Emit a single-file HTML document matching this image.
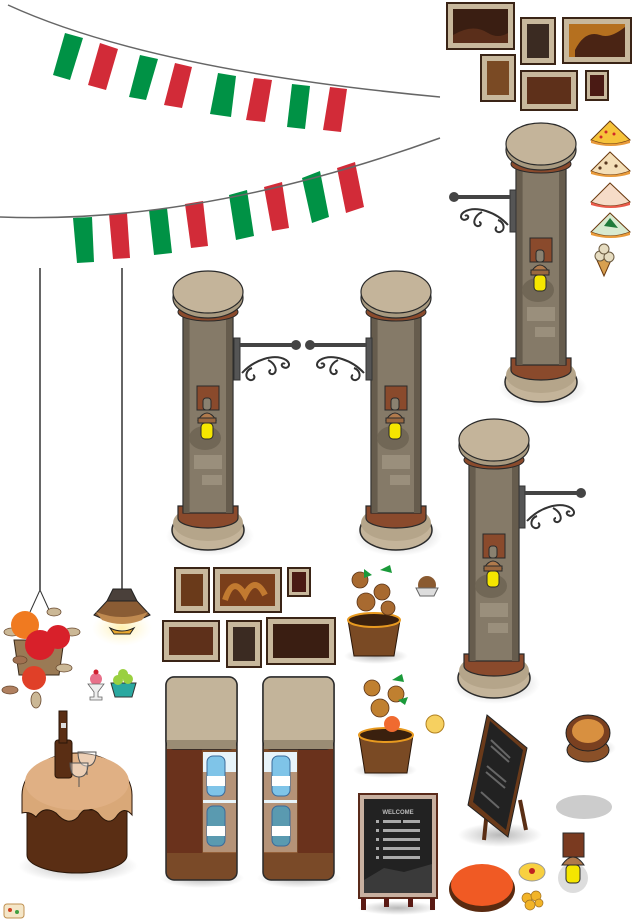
<!DOCTYPE html>
<html><head><meta charset="utf-8"><style>
html,body{margin:0;padding:0;background:#fff;width:634px;height:924px;overflow:hidden}
svg{display:block}
</style></head><body>
<svg width="634" height="924" viewBox="0 0 634 924" xmlns="http://www.w3.org/2000/svg">
<defs>
<radialGradient id="sh"><stop offset="0" stop-color="#000" stop-opacity=".28"/><stop offset="1" stop-color="#000" stop-opacity="0"/></radialGradient>
<radialGradient id="glow"><stop offset="0" stop-color="#ffe98a" stop-opacity=".7"/><stop offset="1" stop-color="#fff3c0" stop-opacity="0"/></radialGradient>
<g id="pillar">
<ellipse cx="38" cy="268" rx="44" ry="20" fill="url(#sh)"/>
<ellipse cx="36" cy="262" rx="36" ry="20" fill="#c4b49a" stroke="#2a2a2a" stroke-width="1.5"/>
<ellipse cx="36" cy="255" rx="35" ry="18" fill="#b5a58a"/>
<path d="M6,238 h60 v12 a30,10 0 0 1 -60,0z" fill="#8a4a2c" stroke="#2a2a2a" stroke-width="1.2"/>
<rect x="11" y="40" width="50" height="205" fill="#857a68" stroke="#2a2a2a" stroke-width="1.2"/>
<rect x="11.6" y="40" width="6" height="205" fill="#665c4d"/>
<rect x="54" y="40" width="6.4" height="205" fill="#665c4d"/>
<rect x="22" y="187" width="28" height="14" fill="#9a8f7c"/>
<rect x="30" y="207" width="20" height="10" fill="#9a8f7c"/>
<ellipse cx="33" cy="170" rx="16" ry="12" fill="#716756"/>
<rect x="25" y="118" width="22" height="24" fill="#8a4a2c" stroke="#2a2a2a" stroke-width="1"/>
<rect x="31" y="130" width="8" height="12" rx="3" fill="#8a8170" stroke="#2a2a2a" stroke-width="1"/>
<path d="M26,152 q9,-14 18,0z" fill="#b07a4c" stroke="#2a2a2a" stroke-width="1"/>
<rect x="26" y="150" width="18" height="5" fill="#9a6840" stroke="#2a2a2a" stroke-width="1"/>
<rect x="29" y="155" width="12" height="16" rx="4" fill="#f5e600" stroke="#2a2a2a" stroke-width="1"/>
<ellipse cx="36" cy="44" rx="30" ry="9" fill="#8a4a2c" stroke="#2a2a2a" stroke-width="1"/>
<ellipse cx="36" cy="30" rx="35" ry="20" fill="#a89a80" stroke="#2a2a2a" stroke-width="1.2"/>
<ellipse cx="36" cy="24" rx="35" ry="21" fill="#c4b49a" stroke="#2a2a2a" stroke-width="1.2"/>
</g>
<g id="bracket" fill="none" stroke="#333" stroke-width="2">
<rect x="0" y="0" width="6" height="42" fill="#555" stroke="#333" stroke-width="1"/>
<line x1="6" y1="7" x2="60" y2="7" stroke="#444" stroke-width="4"/>
<circle cx="62" cy="7" r="5" fill="#444" stroke="none"/>
<path d="M8,35 C20,22 40,15 52,22 c6,4 2,10 -3,7 c-3,-2 0,-5 2,-3"/>
<path d="M18,30 c-6,2 -8,10 -2,12 c4,1 6,-4 3,-5"/>
<path d="M34,22 c8,4 10,12 5,14 c-4,1 -5,-4 -2,-4"/>
</g>
</defs>

<!-- bunting -->
<path d="M8,5 Q150,70 440,97" fill="none" stroke="#666" stroke-width="1.5"/>
<g fill="#009245"><polygon points="65,33 83,38 70,80 53,75"/><polygon points="140,55 158,59 146,100 129,97"/><polygon points="218,73 236,76 231,117 210,114"/><polygon points="292,84 310,86 305,129 287,127"/>
<polygon points="73,218 92,217 94,262 77,263"/><polygon points="149,210 167,208 172,253 154,255"/><polygon points="229,195 247,190 254,236 236,240"/><polygon points="302,178 320,171 329,217 312,223"/></g>
<g fill="#d22b38"><polygon points="100,43 118,49 106,90 88,85"/><polygon points="175,63 192,67 182,108 164,105"/><polygon points="254,78 272,80 265,122 246,120"/><polygon points="330,87 347,89 341,132 323,130"/>
<polygon points="109,214 127,213 130,258 113,259"/><polygon points="185,204 203,201 208,246 191,248"/><polygon points="264,187 282,182 289,228 272,231"/><polygon points="337,168 355,162 364,207 346,213"/></g>
<path d="M0,217 Q200,225 440,138" fill="none" stroke="#666" stroke-width="1.5"/>

<!-- frames top right -->
<g stroke="#3a2416" stroke-width="2">
<rect x="447" y="3" width="67" height="46" fill="#c8b89c"/><rect x="453" y="9" width="55" height="34" fill="#3a1e12" stroke="none"/><path d="M453,35 q20,-12 35,-2 q10,6 20,0 v10 h-55z" fill="#5a2e1a" stroke="none"/>
<rect x="521" y="18" width="34" height="46" fill="#c8b89c"/><rect x="527" y="24" width="22" height="34" fill="#3b2b22" stroke="none"/>
<rect x="563" y="18" width="68" height="45" fill="#c8b89c"/><rect x="569" y="24" width="56" height="33" fill="#b5701f" stroke="none"/><path d="M575,50 q10,-20 25,-15 q10,4 25,-8 v30 h-50z" fill="#4a2414" stroke="none"/>
<rect x="481" y="55" width="34" height="46" fill="#c8b89c"/><rect x="487" y="61" width="22" height="34" fill="#7a4a24" stroke="none"/>
<rect x="521" y="71" width="56" height="39" fill="#c8b89c"/><rect x="527" y="77" width="44" height="27" fill="#5e301a" stroke="none"/>
<rect x="586" y="71" width="22" height="29" fill="#c8b89c"/><rect x="590" y="75" width="14" height="21" fill="#4a1a14" stroke="none"/>
</g>

<!-- pizzas -->
<g stroke="#6a3a10" stroke-width="1">
<path d="M591,140 L610,121 L630,140 q-20,8 -39,0z" fill="#f6c33a"/><path d="M591,171 L610,152 L630,171 q-20,8 -39,0z" fill="#f4dfb8"/>
<path d="M591,202 L610,183 L630,202 q-20,8 -39,0z" fill="#f6dcc8"/><path d="M591,232 L610,213 L630,232 q-20,8 -39,0z" fill="#d8ead0"/>
</g>
<path d="M591,143 q20,6 39,0 v-3 q-20,8 -39,0z" fill="#e89a3a"/><path d="M591,174 q20,6 39,0 v-3 q-20,8 -39,0z" fill="#e89a3a"/><path d="M591,205 q20,6 39,0 v-3 q-20,8 -39,0z" fill="#e85a4a"/><path d="M591,235 q20,6 39,0 v-3 q-20,8 -39,0z" fill="#e89a3a"/>
<g fill="#d0282a"><circle cx="606" cy="132" r="1.5"/><circle cx="614" cy="134" r="1.5"/><circle cx="601" cy="137" r="1.5"/></g>
<g fill="#5a3a20"><circle cx="606" cy="163" r="1.6"/><circle cx="616" cy="166" r="1.6"/><circle cx="600" cy="168" r="1.6"/></g>
<path d="M604,226 l6,-8 l8,10z" fill="#1f7a3a"/>
<path d="M596,258 l8,18 l8,-18z" fill="#d8a050" stroke="#6a3a10"/><circle cx="600" cy="256" r="5" fill="#e6dcc0" stroke="#6a5a40"/><circle cx="609" cy="257" r="5" fill="#e6dcc0" stroke="#6a5a40"/><circle cx="604" cy="249" r="5" fill="#e6dcc0" stroke="#6a5a40"/>

<!-- pillars -->
<use href="#pillar" x="172" y="268"/>
<use href="#bracket" x="234" y="338"/>
<use href="#pillar" x="360" y="268"/>
<use href="#bracket" transform="translate(372,338) scale(-1,1)"/>
<use href="#pillar" x="505" y="120"/>
<use href="#bracket" transform="translate(516,190) scale(-1,1)"/>
<use href="#pillar" x="458" y="416"/>
<use href="#bracket" x="519" y="486"/>

<!-- hanging lines -->
<line x1="40" y1="268" x2="40" y2="590" stroke="#333" stroke-width="1.5"/>
<line x1="122" y1="268" x2="122" y2="590" stroke="#333" stroke-width="1.5"/>
<!-- hanging flower basket -->
<path d="M40,590 l-10,22 M40,590 l10,22" stroke="#333" fill="none"/>
<path d="M14,640 h50 l-5,35 h-40z" fill="#9a7a55" stroke="#3a2a1a"/>
<g stroke="#6a4a30" stroke-width=".8">
<ellipse cx="12" cy="632" rx="8" ry="4" fill="#cbb896"/><ellipse cx="72" cy="632" rx="8" ry="4" fill="#cbb896"/><ellipse cx="10" cy="690" rx="8" ry="4" fill="#b08060"/><ellipse cx="64" cy="668" rx="8" ry="4" fill="#cbb896"/><ellipse cx="36" cy="700" rx="5" ry="8" fill="#cbb896"/><ellipse cx="54" cy="612" rx="7" ry="4" fill="#cbb896"/><ellipse cx="20" cy="660" rx="7" ry="4" fill="#a07050"/>
</g>
<circle cx="25" cy="625" r="14" fill="#f07a20"/><circle cx="40" cy="645" r="15" fill="#d8202a"/><circle cx="58" cy="637" r="12" fill="#d8202a"/><circle cx="34" cy="678" r="12" fill="#e04028"/>
<!-- pendant lamp -->
<ellipse cx="122" cy="628" rx="30" ry="18" fill="url(#glow)"/>
<path d="M113,589 h18 l6,12 h-30z" fill="#4a403a" stroke="#222"/>
<path d="M107,601 h30 l13,14 q-28,14 -56,0z" fill="#8a5c34" stroke="#222"/>
<path d="M96,612 q26,10 52,0 l-6,8 q-20,8 -40,0z" fill="#c08a50"/>
<path d="M110,628 q12,6 24,0 l-4,6 h-16z" fill="#e8a830" stroke="#222"/>
<!-- sundaes -->
<circle cx="96" cy="679" r="6" fill="#e8708a"/><circle cx="96" cy="672" r="2.5" fill="#d02030"/><path d="M88,684 h16 l-6,8 v5 h4 v3 h-12 v-3 h4 v-5z" fill="#eee" stroke="#666" stroke-width=".8"/>
<path d="M111,683 h25 l-4,14 h-17z" fill="#2aa8a0" stroke="#333"/><circle cx="118" cy="680" r="5" fill="#9ad040"/><circle cx="128" cy="679" r="5" fill="#9ad040"/><circle cx="123" cy="674" r="5" fill="#9ad040"/>
<!-- table -->
<ellipse cx="78" cy="866" rx="60" ry="16" fill="url(#sh)"/>
<path d="M27,810 v45 a50,18 0 0 0 100,0 v-45z" fill="#5a2e14" stroke="#2a1608"/>
<path d="M22,795 a55,42 0 0 1 110,0 v20 q-8,-10 -16,2 q-8,10 -18,-4 q-12,-10 -20,4 q-10,10 -22,-4 q-12,-8 -20,4 q-6,-6 -14,-4z" fill="#d9a878" stroke="#2a1608"/>
<ellipse cx="77" cy="782" rx="52" ry="28" fill="#e0b084"/>
<rect x="55" y="740" width="17" height="38" rx="3" fill="#5a2e14" stroke="#2a1608"/><rect x="59" y="711" width="8" height="32" fill="#5a2e14" stroke="#2a1608"/><rect x="61" y="723" width="5" height="5" fill="#ddd"/>
<path d="M78,752 h18 q0,14 -9,14 q-9,0 -9,-14z" fill="#fff" fill-opacity=".4" stroke="#555"/><line x1="87" y1="766" x2="87" y2="775" stroke="#555"/>
<path d="M70,763 h18 q0,14 -9,14 q-9,0 -9,-14z" fill="#fff" fill-opacity=".4" stroke="#555"/><line x1="79" y1="777" x2="79" y2="787" stroke="#555"/>

<!-- lower frames -->
<g stroke="#3a2416" stroke-width="2">
<rect x="175" y="568" width="34" height="44" fill="#c8b89c"/><rect x="181" y="574" width="22" height="32" fill="#6a3a1a" stroke="none"/>
<rect x="214" y="568" width="67" height="44" fill="#c8b89c"/><rect x="220" y="574" width="55" height="32" fill="#7a3e1a" stroke="none"/><path d="M225,600 q8,-25 20,-5 q10,-20 20,0" stroke="#c27a30" stroke-width="6" fill="none"/>
<rect x="288" y="568" width="22" height="28" fill="#c8b89c"/><rect x="292" y="572" width="14" height="20" fill="#4a1a14" stroke="none"/>
<rect x="163" y="621" width="56" height="40" fill="#c8b89c"/><rect x="169" y="627" width="44" height="28" fill="#5e301a" stroke="none"/>
<rect x="227" y="621" width="34" height="46" fill="#c8b89c"/><rect x="233" y="627" width="22" height="34" fill="#3b2b22" stroke="none"/>
<rect x="267" y="618" width="68" height="46" fill="#c8b89c"/><rect x="273" y="624" width="56" height="34" fill="#3a1e12" stroke="none"/>
</g>

<!-- fridges -->
<g>
<ellipse cx="202" cy="878" rx="42" ry="10" fill="url(#sh)"/>
<rect x="166" y="677" width="71" height="203" rx="8" fill="#7a4a28" stroke="#2a2a2a" stroke-width="1.5"/>
<rect x="167" y="748" width="35" height="105" fill="#6a321c"/>
<rect x="203" y="752" width="33" height="100" fill="#e8f4fa"/>
<rect x="203" y="772" width="33" height="28" fill="#a06a40" opacity=".7"/><rect x="203" y="803" width="33" height="50" fill="#a06a40" opacity=".7"/>
<rect x="207" y="756" width="18" height="40" rx="6" fill="#7fc4e8" stroke="#3a6a9a"/><rect x="207" y="806" width="18" height="40" rx="6" fill="#5a9ab0" stroke="#3a6a9a"/>
<rect x="207" y="776" width="18" height="10" fill="#fff"/><rect x="207" y="826" width="18" height="10" fill="#fff"/>
<rect x="166" y="677" width="71" height="72" rx="8" fill="#c3b49a" stroke="#2a2a2a" stroke-width="1.5"/>
<rect x="167" y="740" width="69" height="9" fill="#9a8c74"/>
</g>
<g>
<ellipse cx="299" cy="878" rx="42" ry="10" fill="url(#sh)"/>
<rect x="263" y="677" width="71" height="203" rx="8" fill="#7a4a28" stroke="#2a2a2a" stroke-width="1.5"/>
<rect x="298" y="748" width="35" height="105" fill="#6a321c"/>
<rect x="264" y="752" width="33" height="100" fill="#e8f4fa"/>
<rect x="264" y="772" width="33" height="28" fill="#a06a40" opacity=".7"/><rect x="264" y="803" width="33" height="50" fill="#a06a40" opacity=".7"/>
<rect x="272" y="756" width="18" height="40" rx="6" fill="#7fc4e8" stroke="#3a6a9a"/><rect x="272" y="806" width="18" height="40" rx="6" fill="#5a9ab0" stroke="#3a6a9a"/>
<rect x="272" y="776" width="18" height="10" fill="#fff"/><rect x="272" y="826" width="18" height="10" fill="#fff"/>
<rect x="263" y="677" width="71" height="72" rx="8" fill="#c3b49a" stroke="#2a2a2a" stroke-width="1.5"/>
<rect x="264" y="740" width="69" height="9" fill="#9a8c74"/>
</g>

<!-- plants -->
<ellipse cx="376" cy="656" rx="32" ry="8" fill="url(#sh)"/>
<path d="M348,620 h52 l-6,36 h-40z" fill="#7a4a24" stroke="#2a1608"/><ellipse cx="374" cy="620" rx="26" ry="7" fill="#3a200e" stroke="#e89a20" stroke-width="2"/>
<g fill="#a86a30" stroke="#5a3418" stroke-width=".8"><circle cx="360" cy="580" r="8"/><circle cx="382" cy="592" r="8"/><circle cx="366" cy="602" r="9"/><circle cx="388" cy="608" r="7"/></g>
<path d="M380,570 l10,-5 l2,8z M372,575 l-8,-6 l0,9z" fill="#1a9a3a"/>
<ellipse cx="385" cy="770" rx="32" ry="8" fill="url(#sh)"/>
<path d="M359,735 h54 l-6,38 h-42z" fill="#7a4a24" stroke="#2a1608"/><ellipse cx="386" cy="735" rx="27" ry="7" fill="#3a200e" stroke="#e89a20" stroke-width="2"/>
<g fill="#c08030" stroke="#5a3418" stroke-width=".8"><circle cx="372" cy="688" r="8"/><circle cx="396" cy="694" r="8"/><circle cx="380" cy="708" r="9"/></g><circle cx="392" cy="724" r="8" fill="#f06a30"/>
<path d="M392,680 l10,-6 l2,8z M398,700 l10,-3 l-3,8z" fill="#1a9a3a"/>
<circle cx="427" cy="585" r="9" fill="#8a5a30"/><path d="M416,588 h22 l-4,8 h-14z" fill="#ddd" stroke="#666"/>
<circle cx="435" cy="724" r="9" fill="#f6d060" stroke="#b08020"/>

<!-- menu board -->
<ellipse cx="398" cy="908" rx="40" ry="7" fill="url(#sh)"/>
<rect x="359" y="794" width="78" height="104" fill="#c8b0a0" stroke="#5a2a1a" stroke-width="2"/>
<rect x="364" y="799" width="68" height="94" fill="#222"/>
<path d="M364,880 l20,-12 l20,4 l28,-8 v29 h-68z" fill="#3a3a3a"/>
<text x="398" y="814" font-family="Liberation Sans, sans-serif" font-size="6" font-weight="bold" fill="#bbb" text-anchor="middle">WELCOME</text>
<g fill="#aaa"><rect x="376" y="820" width="3" height="3"/><rect x="383" y="820" width="18" height="3"/><rect x="403" y="820" width="17" height="3"/>
<rect x="376" y="829" width="3" height="3"/><rect x="383" y="829" width="37" height="3"/><rect x="376" y="838" width="3" height="3"/><rect x="383" y="838" width="37" height="3"/>
<rect x="376" y="847" width="3" height="3"/><rect x="383" y="847" width="37" height="3"/><rect x="376" y="856" width="3" height="3"/><rect x="383" y="856" width="37" height="3"/></g>
<g fill="#5a1a14"><rect x="361" y="898" width="5" height="12"/><rect x="384" y="898" width="5" height="9"/><rect x="408" y="898" width="5" height="9"/><rect x="430" y="898" width="5" height="12"/></g>

<!-- A-frame -->
<ellipse cx="500" cy="835" rx="42" ry="12" fill="url(#sh)"/>
<path d="M487,810 l-3,30 M520,800 l6,30" stroke="#5a2e14" stroke-width="4"/>
<polygon points="487,715 527,748 508,837 468,805" fill="#6a3a1a" stroke="#222"/>
<polygon points="490,721 523,750 506,830 473,802" fill="#222"/>
<g stroke="#666" stroke-width="2"><line x1="491" y1="740" x2="510" y2="758"/><line x1="491" y1="746" x2="509" y2="762"/><line x1="487" y1="766" x2="506" y2="782"/><line x1="486" y1="772" x2="505" y2="788"/><line x1="481" y1="792" x2="499" y2="808"/></g>
<!-- stool -->
<ellipse cx="590" cy="748" rx="26" ry="10" fill="url(#sh)"/>
<ellipse cx="588" cy="750" rx="21" ry="12" fill="#8a5028" stroke="#222"/>
<ellipse cx="588" cy="733" rx="22" ry="18" fill="#7a4020" stroke="#222"/>
<ellipse cx="588" cy="731" rx="16" ry="12" fill="#d89040"/>
<ellipse cx="584" cy="807" rx="28" ry="12" fill="#ccc"/>
<!-- red round -->
<ellipse cx="482" cy="889" rx="33" ry="23" fill="#5a2a10"/>
<ellipse cx="482" cy="885" rx="31" ry="21" fill="#f05a24"/>
<ellipse cx="532" cy="872" rx="13" ry="9" fill="#f8d040" stroke="#999"/><circle cx="532" cy="871" r="3" fill="#c02020"/>
<g fill="#f2b428" stroke="#a07020" stroke-width=".7"><circle cx="527" cy="898" r="5"/><circle cx="536" cy="896" r="5"/><circle cx="530" cy="905" r="5"/><circle cx="539" cy="903" r="4"/></g>
<!-- small lamp -->
<ellipse cx="573" cy="878" rx="15" ry="15" fill="#ddd"/>
<rect x="563" y="833" width="21" height="24" fill="#7a3a20" stroke="#2a2a2a"/>
<path d="M562,865 q11,-16 22,0z" fill="#b07a4c" stroke="#2a2a2a"/>
<rect x="566" y="865" width="14" height="18" rx="4" fill="#f5e600" stroke="#2a2a2a"/>
<!-- tiny icon -->
<rect x="4" y="904" width="20" height="14" rx="3" fill="#f4e6c8" stroke="#c09050"/><circle cx="10" cy="910" r="2" fill="#d04020"/><circle cx="17" cy="912" r="2" fill="#40a040"/>
</svg>
</body></html>
